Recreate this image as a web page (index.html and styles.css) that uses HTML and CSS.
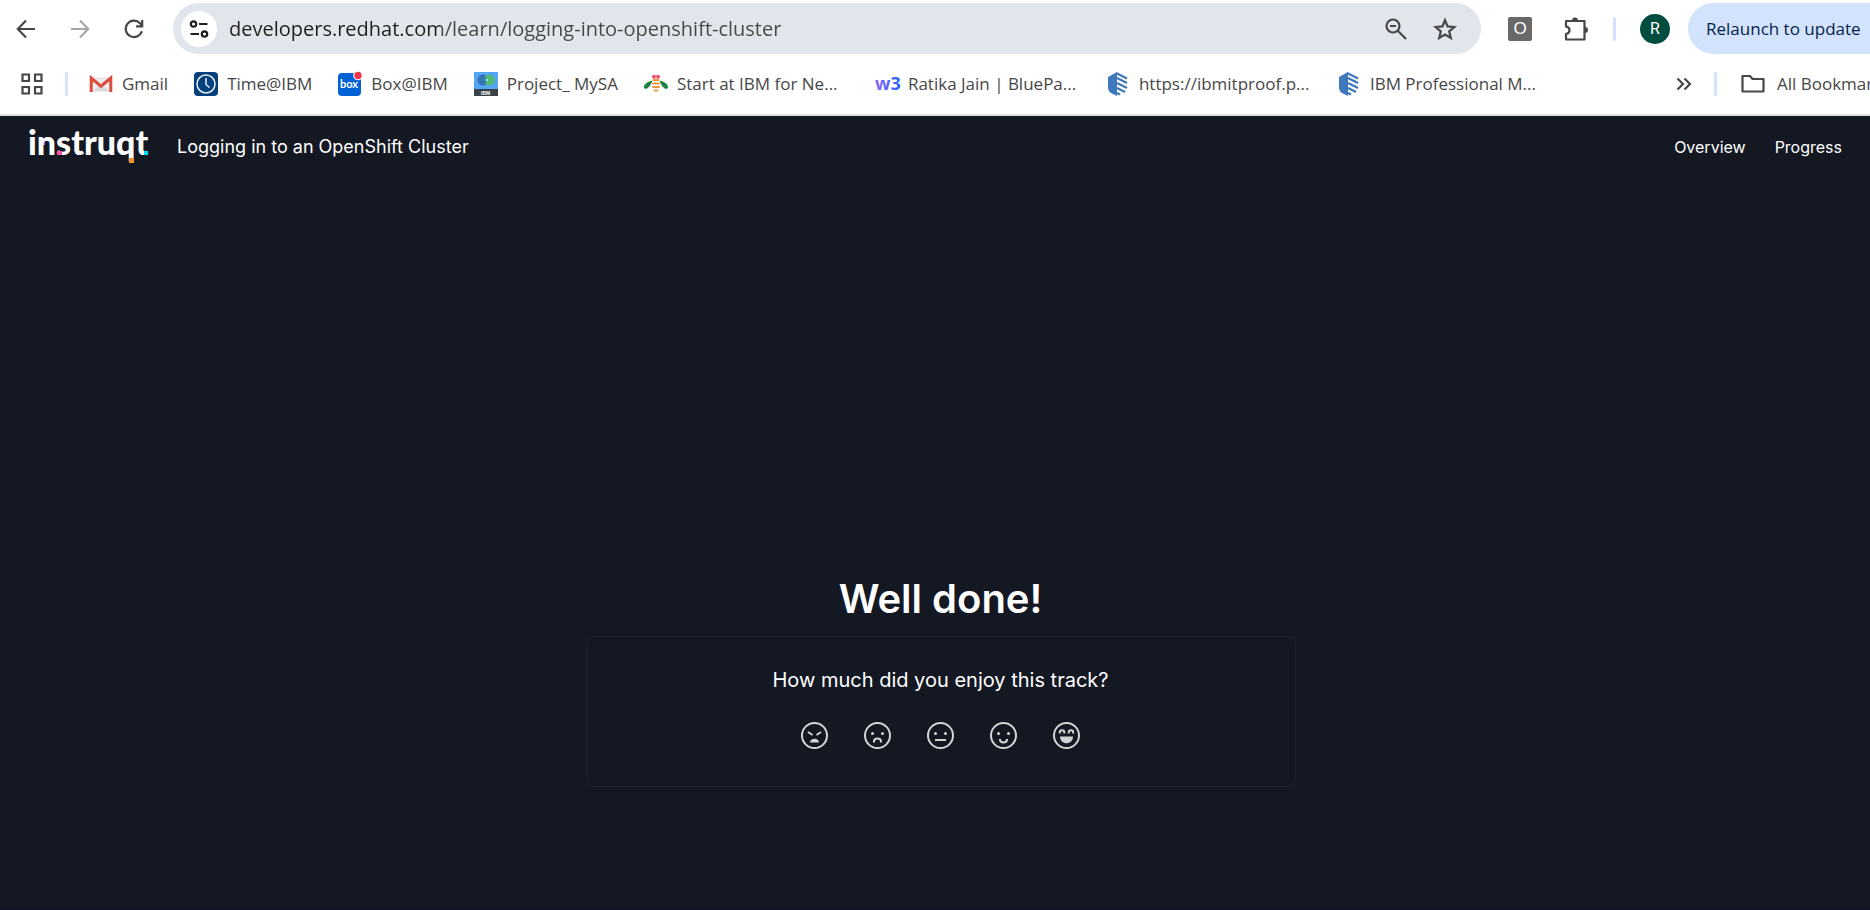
FILE: index.html
```html
<!DOCTYPE html>
<html lang="en">
<head>
<meta charset="utf-8">
<title>Logging in to an OpenShift Cluster</title>
<link rel="stylesheet" href="styles.css">
</head>
<body>
<div class="browser">
  <div class="toolbar">
    <div class="nav-buttons">
      <button class="icon-button" aria-label="Back"><svg width="20" height="20" viewBox="0 0 20 20" class="line"><path d="M19 10H2M10 1.500L1.800 10l8.200 8.500"/></svg></button>
      <button class="icon-button muted" aria-label="Forward"><svg width="20" height="20" viewBox="0 0 20 20" class="line"><path d="M1 10h17M10 1.500l8.200 8.500-8.200 8.500"/></svg></button>
      <button class="icon-button" aria-label="Reload"><svg width="20" height="20" viewBox="0 0 20 20" class="line"><path d="M17.800 12.200A8.200 8.200 0 1 1 16 4.300L17.500 6M18.200 1v6.300H12"/></svg></button>
    </div>
    <div class="omnibox">
      <button class="site-info" aria-label="Site information"><svg width="20" height="20" viewBox="0 0 20 20" class="line"><circle cx="4.500" cy="5" r="2.700"/><path d="M10 5h8.500M1.500 15H10"/><circle cx="15.500" cy="15" r="2.700"/></svg></button>
      <input class="url" type="text" aria-label="Address" value="developers.redhat.com/learn/logging-into-openshift-cluster">
      <button class="icon-button" aria-label="Zoom"><svg width="22" height="22" viewBox="0 0 22 22" class="line"><circle cx="8" cy="8" r="6.500"/><path d="M13 13l8 8M5 8h6"/></svg></button>
      <button class="icon-button" aria-label="Bookmark this page"><svg width="24" height="24" viewBox="0 0 24 24" class="line"><path d="M12 3.200l2.600 6.200 6.700.6-5.100 4.400 1.600 6.600-5.800-3.500-5.800 3.500 1.600-6.600-5.100-4.400 6.700-.6z"/></svg></button>
    </div>
    <button class="extension" aria-label="Extension O">O</button>
    <button class="icon-button" aria-label="Extensions"><svg width="26" height="26" viewBox="0 0 26 26" class="line"><path d="M3 5h18.500v18.500H3v-5.500c2.300-.5 3.500-2 3.500-3.800S5.300 10.900 3 10.400z" stroke-linejoin="round"/><path d="M9 4.500a3 3 0 0 1 6 0zM22 11a3 3 0 0 1 0 6z" class="solid"/></svg></button>
    <span class="divider"></span>
    <button class="avatar" aria-label="Profile">R</button>
    <button class="relaunch">Relaunch to update</button>
  </div>
  <nav class="bookmarks" aria-label="Bookmarks">
    <button class="icon-button" aria-label="Apps"><svg width="22" height="22" viewBox="0 0 22 22" class="line"><path d="M1.500 1.500h6.500v6.500H1.500zM14 1.500h6.500v6.500H14zM1.500 14h6.500v6.500H1.500zM14 14h6.500v6.500H14z"/></svg></button>
    <span class="divider"></span>
    <div class="bookmark-list">
      <a class="bookmark" href="#"><svg width="24" height="24" viewBox="0 0 24 24"><path d="M2 5h20v15H2z" fill="#ececec"/><path d="M4 19l8-7 8 7z" fill="#dcdcdc"/><path d="M2.200 20V6l9.800 8.200L21.800 6v14" fill="none" stroke="#dd4b3e" stroke-width="3"/></svg>Gmail</a>
      <a class="bookmark" href="#"><svg width="24" height="24" viewBox="0 0 24 24"><rect width="24" height="24" rx="4" fill="#06407c"/><circle cx="12" cy="12" r="9" fill="none" stroke="#e8f0f8" stroke-width="1.500"/><path d="M12 6v6.500l3.500 3" fill="none" stroke="#e8f0f8" stroke-width="1.500"/></svg>Time@IBM</a>
      <a class="bookmark" href="#"><svg width="24" height="24" viewBox="0 0 24 24"><rect y="1" width="23" height="23" rx="4" fill="#0061d5"/><circle cx="20" cy="3.500" r="4.800" fill="#fff"/><circle cx="20" cy="3.500" r="3.700" fill="#f4364c"/><text x="2" y="16" class="box-text">box</text></svg>Box@IBM</a>
      <a class="bookmark" href="#"><svg width="24" height="24" viewBox="0 0 24 24"><path d="M0 0h24v17H0z" fill="#54a5f5"/><path d="M0 17h24v7H0z" fill="#3b4148"/><circle cx="9" cy="8" r="5.500" fill="#3772b8"/><circle cx="15.500" cy="8" r="5.500" fill="#4fba7b"/><circle cx="11" cy="8" r="2.500" fill="#248f9c"/><circle cx="13" cy="8" r="1" fill="#e4f5ef"/><text x="7" y="23" class="ibm-text">IBM</text></svg>Project_ MySA</a>
      <a class="bookmark long" href="#"><svg width="24" height="24" viewBox="0 0 24 24"><circle cx="10" cy="4.800" r="2" fill="#fa4d6a"/><circle cx="14" cy="4.800" r="2" fill="#fa4d6a"/><path d="M8.500 8.500C4 9.500 0 12 0 15c0 3.500 5.500 2.500 8.500-6.500zM15.500 8.500C20 9.500 24 12 24 15c0 3.500-5.500 2.500-8.500-6.500z" fill="#188340"/><path d="M9.500 8h5M9 11.500h6M9 15h6M10.500 18.500h3" fill="none" stroke="#ee9a45" stroke-width="2.200" stroke-linecap="round"/></svg>Start at IBM for Ne...</a>
      <a class="bookmark long" href="#"><svg width="24" height="24" viewBox="0 0 24 24"><defs><linearGradient id="w3"><stop stop-color="#8f66fb"/><stop offset="1" stop-color="#2562ff"/></linearGradient></defs><text x="0" y="18" class="w3-text" fill="url(#w3)">w3</text></svg>Ratika Jain | BluePa...</a>
      <a class="bookmark long" href="#"><svg width="24" height="24" viewBox="0 0 24 24"><path d="M11 0v24L6 21.500Q2 19.500 2 15.500V5z" fill="#3f78bd"/><path d="M10 1l11 5.500M11 6l10 5M11 11l10 5M11 16l8 4M11 21l3 1.500" stroke="#3f78bd" stroke-width="2.300"/></svg>https://ibmitproof.p...</a>
      <a class="bookmark long" href="#"><svg width="24" height="24" viewBox="0 0 24 24"><path d="M11 0v24L6 21.500Q2 19.500 2 15.500V5z" fill="#3f78bd"/><path d="M10 1l11 5.500M11 6l10 5M11 11l10 5M11 16l8 4M11 21l3 1.500" stroke="#3f78bd" stroke-width="2.300"/></svg>IBM Professional M...</a>
    </div>
    <button class="icon-button" aria-label="More bookmarks"><svg width="16" height="14" viewBox="0 0 16 14" class="line"><path d="M1.500 1.500L7 7l-5.500 5.500M8.500 1.500L14 7l-5.500 5.500"/></svg></button>
    <span class="divider"></span>
    <a class="bookmark all" href="#"><svg width="26" height="24" viewBox="0 0 26 24" class="line"><path d="M2.500 4H10l2.500 3h11v12.500h-21z" stroke-linejoin="round"/></svg>All Bookmarks</a>
  </nav>
</div>
<div class="page">
  <header class="site-header">
    <a class="logo" href="#" aria-label="instruqt"><svg width="120" height="38" viewBox="0 0 120 38"><path d="M9 10h6v7H9zM79 22h5v5h-5z" fill="#b472fa"/><text x="-2" y="27" class="logo-text" fill="#fff">instruqt</text><path d="M27 23h5v4h-5z" fill="#ff4ea2"/><path d="M99 30h5v5h-5z" fill="#f98f25"/><path d="M114 23h4v4h-4z" fill="#05d9f7"/></svg></a>
    <span class="track-title">Logging in to an OpenShift Cluster</span>
    <nav class="site-nav" aria-label="Track"><a href="#">Overview</a><a href="#">Progress</a></nav>
  </header>
  <main class="finish">
    <h1>Well done!</h1>
    <section class="card">
      <h2>How much did you enjoy this track?</h2>
      <div class="faces">
        <button aria-label="Hated it"><svg width="27" height="27" viewBox="0 0 27 27" class="face"><circle cx="13.500" cy="13.500" r="12.500"/><path d="M7 10l4.500 3M20 10l-4.500 3"/><path d="M9 20.500c0-5 9-5 9 0z" class="fill"/></svg></button>
        <button aria-label="Disliked it"><svg width="27" height="27" viewBox="0 0 27 27" class="face"><circle cx="13.500" cy="13.500" r="12.500"/><path d="M10 20.500v-1c0-4 7-4 7 0v1"/><circle cx="8.500" cy="11.500" r="1.500" class="fill"/><circle cx="18.500" cy="11.500" r="1.500" class="fill"/></svg></button>
        <button aria-label="Neutral"><svg width="27" height="27" viewBox="0 0 27 27" class="face"><circle cx="13.500" cy="13.500" r="12.500"/><path d="M8 18h11"/><circle cx="8.500" cy="11.500" r="1.500" class="fill"/><circle cx="18.500" cy="11.500" r="1.500" class="fill"/></svg></button>
        <button aria-label="Liked it"><svg width="27" height="27" viewBox="0 0 27 27" class="face"><circle cx="13.500" cy="13.500" r="12.500"/><path d="M10 17v.5c0 4 7 4 7 0V17"/><circle cx="8.500" cy="11.500" r="1.500" class="fill"/><circle cx="18.500" cy="11.500" r="1.500" class="fill"/></svg></button>
        <button aria-label="Loved it"><svg width="27" height="27" viewBox="0 0 27 27" class="face"><circle cx="13.500" cy="13.500" r="12.500"/><path d="M6.800 11.500v-1c0-3 4.500-3 4.500 0v1M15.700 11.500v-1c0-3 4.500-3 4.500 0v1"/><path d="M7 14.500h13c0 9-13 9-13 0z" class="fill"/></svg></button>
      </div>
    </section>
  </main>
</div>
</body>
</html>
```
FILE: styles.css
```css
* { box-sizing: border-box; }
html, body { height: 100%; }
body {
  margin: 0;
  display: flex;
  flex-direction: column;
  overflow: hidden;
  background: #141823;
  font-family: "Open Sans", "Noto Sans", sans-serif;
}
button { border: 0; padding: 0; margin: 0; background: none; font: inherit; color: inherit; }
svg { display: block; flex: none; overflow: visible; }
a { color: inherit; text-decoration: none; }

.browser {
  background: #fff;
  color: #474747;
  border-bottom: 2px solid #dfdfdf;
  overflow: hidden;
}
.line { fill: none; stroke: currentColor; stroke-width: 2.2; }
.solid { fill: currentColor; stroke: none; }
.icon-button { display: grid; place-items: center; flex: none; }
.muted { color: #a6a6a6; }
.divider { flex: none; width: 3px; height: 24px; border-radius: 2px; background: #d3e3fd; }

.toolbar {
  display: flex;
  align-items: center;
  padding: 3px 0 0 16px;
  height: 54px;
}
.nav-buttons { display: flex; gap: 34px; margin-right: 29px; }
.omnibox {
  flex: 1;
  min-width: 0;
  display: flex;
  align-items: center;
  height: 51px;
  padding: 0 24px 0 8px;
  margin-right: 27px;
  gap: 26px;
  border-radius: 26px;
  background: #e1e5ec;
}
.site-info {
  display: grid;
  place-items: center;
  flex: none;
  width: 36px;
  height: 36px;
  border-radius: 50%;
  background: #fff;
  color: #1f1f1f;
}
.url {
  flex: 1;
  min-width: 0;
  border: 0;
  padding: 0;
  margin-left: -14px;
  outline: 0;
  font: 20px/30px "Open Sans", "Noto Sans", sans-serif;
  color: transparent;
  background: linear-gradient(90deg, #1f1f1f 211px, #474747 211px);
  background-clip: text;
}
.extension {
  width: 24px;
  height: 24px;
  margin-right: 31px;
  border-radius: 2px;
  background: #686868;
  color: #fff;
  font: 17px/24px "Liberation Sans", Arial, sans-serif;
}
.toolbar .divider { margin: 0 24px; }
.avatar {
  width: 30px;
  height: 30px;
  margin-right: 18px;
  border-radius: 50%;
  background: #004d40;
  color: #fff;
  font: 16px/30px Roboto, sans-serif;
}
.relaunch {
  flex: none;
  width: 182px;
  height: 51px;
  padding-left: 18px;
  border-radius: 26px 0 0 26px;
  background: #d3e3fd;
  color: #041e49;
  font-size: 17px;
  text-align: left;
  white-space: nowrap;
}

.bookmarks {
  display: flex;
  align-items: center;
  height: 60px;
  padding: 0 0 1px 21px;
  font-size: 17px;
}
.bookmarks .divider { margin: 0 21px 0 22px; }
.bookmark-list { display: flex; gap: 26px; flex: 1; min-width: 0; }
.bookmark { display: flex; align-items: center; gap: 9px; flex: none; white-space: nowrap; }
.long { width: 205px; }
.bookmarks .all { width: 130px; gap: 11px; }
.bookmarks .icon-button + .divider ~ .all { margin-left: 2px; }
.box-text { font: 700 11px Lato, sans-serif; fill: #fff; }
.ibm-text { font: 700 5px "Liberation Sans", sans-serif; fill: #fff; }
.w3-text { font: 700 18px "Open Sans", sans-serif; }

.page {
  flex: 1;
  display: flex;
  flex-direction: column;
  border-bottom: 2px solid #14122a;
  color: #fff;
  font-family: Inter, "Liberation Sans", sans-serif;
}
.site-header {
  display: flex;
  align-items: center;
  height: 62px;
  padding: 0 28px 0 30px;
}
.logo-text { font: 900 34px Lato, sans-serif; }
.track-title { margin-left: 27px; font-size: 18px; line-height: 24px; }
.site-nav { display: flex; gap: 29px; margin-left: auto; font-size: 16px; line-height: 24px; }
.finish {
  flex: 1;
  display: flex;
  flex-direction: column;
  align-items: center;
  justify-content: flex-end;
  padding: 0 0 121px 11px;
}
h1 { margin: 0 0 11px; font-size: 40px; font-weight: 600; line-height: 52px; }
.card {
  width: 100%;
  max-width: 710px;
  padding: 29px 24px 37px;
  border: 1px solid #1e222e;
  border-radius: 8px;
  text-align: center;
}
h2 { margin: 0 0 28px; font-size: 20px; font-weight: 400; line-height: 28px; }
.faces { display: flex; justify-content: center; gap: 36px; }
.face { fill: none; stroke: #d3d4d6; stroke-width: 2; }
.face .fill { fill: #d3d4d6; stroke: none; }
```
